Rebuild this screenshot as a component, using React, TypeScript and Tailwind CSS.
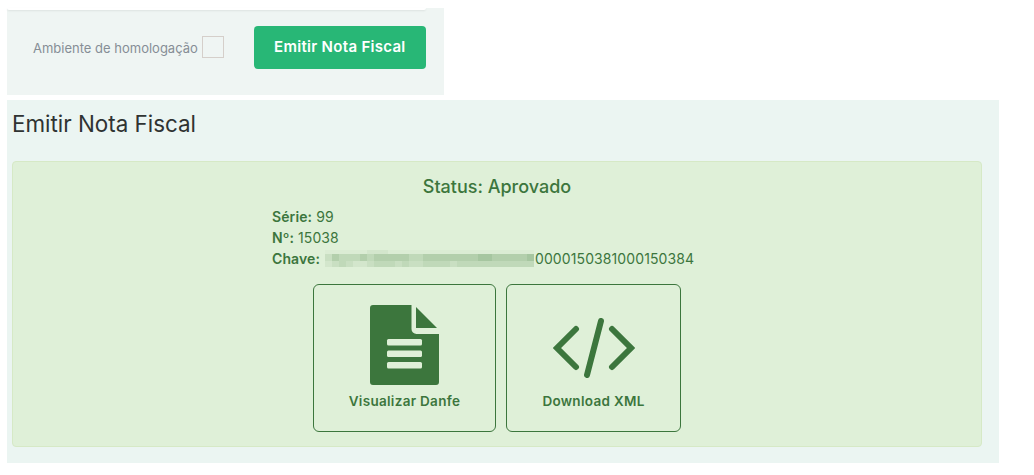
import React from "react";

// pixelated key area: three rows of 7px blocks, values index into blurColor
const BLUR_COLS = 30;
const blurRows: { y: number; h: number; cells: number[] }[] = [
  { y: 0, h: 4, cells: [0,0,0,0,0,0,1,1,1,0,0,0,0,0,0,0,0,0,0,0,0,0,0,0,0,0,0,0,0,0] },
  { y: 4, h: 7, cells: [2,4,3,3,3,4,3,4,4,4,4,4,3,3,4,4,4,4,4,4,4,4,5,5,4,4,4,4,4,5] },
  { y: 11, h: 6, cells: [1,2,3,2,1,1,2,3,3,3,2,3,2,2,3,3,3,3,2,3,3,3,3,3,3,3,3,3,3,3] },
];
const blurColor = ["#dbecd4", "#d3e6cc", "#c9dfc2", "#c0d9b9", "#b3cfac", "#a6c6a0"];

const DocIcon = () => (
  <svg viewBox="0 0 69 80" className="w-[69px] h-[80px] fill-[#3c763d]">
    <path d="M3 0H41.5V24a5 5 0 0 0 5 5H69V77a3 3 0 0 1-3 3H3a3 3 0 0 1-3-3V3a3 3 0 0 1 3-3Z" />
    <path d="M46 2L67 23H46Z" />
    <g className="fill-[#dff0d8]">
      <rect x="17" y="34" width="35" height="6.5" rx="1.5" />
      <rect x="17" y="45.5" width="35" height="6.5" rx="1.5" />
      <rect x="17" y="57" width="35" height="6.5" rx="1.5" />
    </g>
  </svg>
);

const CodeIcon = () => (
  <svg viewBox="0 0 82 60" fill="none" className="w-[82px] h-[60px] stroke-[#3c763d]" strokeWidth="6" strokeLinecap="round">
    <path d="M23 11L4 30L23 49" />
    <path d="M59 11L78 30L59 49" />
    <path d="M48 3L34 57" />
  </svg>
);

export default function App() {
  return (
    <div className="font-['Inter',sans-serif] bg-white min-h-[475px] pt-2 pl-[7px] w-[1034px] overflow-hidden">
      {/* top panel */}
      <div className="relative w-[437px] h-[87px] bg-[#eff5f3]">
        <div className="absolute left-0 right-[18px] top-0 h-[2px] bg-white rounded-b shadow-[0_1px_2px_rgba(0,0,0,0.08)]" />
        <div className="flex items-center h-[87px] pb-[9px] pl-[26px]">
          <span className="text-[13px] leading-none text-[#868e96] pt-[2px]">Ambiente de homologação</span>
          <span className="ml-[4px] w-[22px] h-[22px] border border-[#d5cfca]" />
          <button className="ml-[30px] w-[172px] h-[43px] rounded bg-[#28b776] text-white text-[15px] font-semibold tracking-[0.3px]">
            Emitir Nota Fiscal
          </button>
        </div>
      </div>

      {/* main panel */}
      <div className="mt-[5px] w-[992px] h-[363px] bg-[#ebf5f2] pl-[5px] pt-[10px]">
        <h2 className="text-[22.4px] leading-[28px] text-[#2f3332]">Emitir Nota Fiscal</h2>
        <div className="mt-[23px] w-[970px] h-[286px] bg-[#dff0d8] border border-[#d6e9c6] rounded text-[#3c763d]">
          <div className="text-center text-[18px] font-medium leading-5 pt-[15px]">Status: Aprovado</div>
          <div className="pl-[259px] mt-[9px] text-[14px] leading-[21px] tracking-[0.1px]">
            <div><b className="font-semibold">Série:</b> 99</div>
            <div><b className="font-semibold">Nº:</b> 15038</div>
            <div className="flex items-center">
              <b className="font-semibold">Chave:</b>
              <svg
                viewBox={`0 0 ${BLUR_COLS} 17`}
                preserveAspectRatio="none"
                className="ml-[5px] w-[209px] h-[17px]"
                shapeRendering="crispEdges"
              >
                {blurRows.map((row) =>
                  row.cells.map((v, x) => (
                    <rect key={`${x}-${row.y}`} x={x} y={row.y} width="1" height={row.h} fill={blurColor[v]} />
                  ))
                )}
              </svg>
              <span className="ml-[1px]">0000150381000150384</span>
            </div>
          </div>
          <div className="flex justify-start gap-[10px] pl-[300px] mt-[15px]">
            <div className="w-[183px] h-[148px] border border-[#3c763d] rounded-md flex flex-col items-center pt-[20px]">
              <DocIcon />
              <span className="mt-[6px] text-[13.5px] font-semibold tracking-[0.3px]">Visualizar Danfe</span>
            </div>
            <div className="w-[175px] h-[148px] border border-[#3c763d] rounded-md flex flex-col items-center pt-[33px]">
              <CodeIcon />
              <span className="mt-[13px] text-[13.5px] font-semibold tracking-[0.3px]">Download XML</span>
            </div>
          </div>
        </div>
      </div>
    </div>
  );
}
